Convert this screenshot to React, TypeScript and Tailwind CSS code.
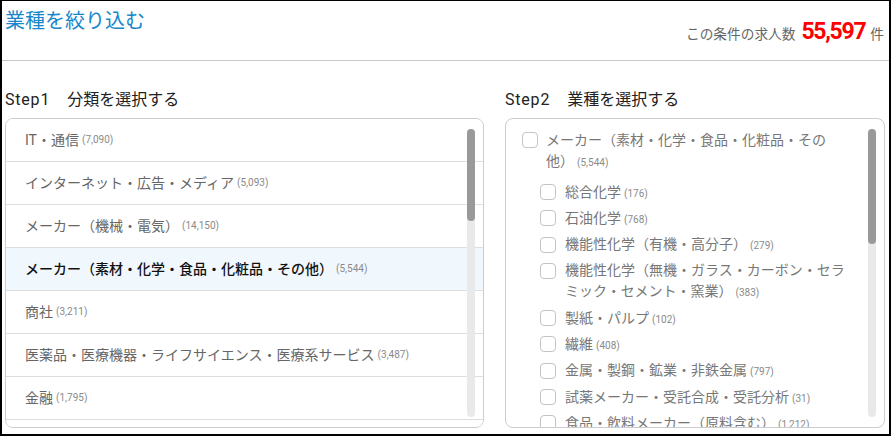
import React from "react";

const FONT = { fontFamily: '"Roboto", "Noto Sans CJK JP", sans-serif' };

const leftItems: { label: string; count: string; selected?: boolean }[] = [
  { label: "IT・通信", count: "7,090" },
  { label: "インターネット・広告・メディア", count: "5,093" },
  { label: "メーカー（機械・電気）", count: "14,150" },
  { label: "メーカー（素材・化学・食品・化粧品・その他）", count: "5,544", selected: true },
  { label: "商社", count: "3,211" },
  { label: "医薬品・医療機器・ライフサイエンス・医療系サービス", count: "3,487" },
  { label: "金融", count: "1,795" },
  { label: "コンサルティング", count: "2,104" },
];

const subItems: { label: string; count: string }[] = [
  { label: "総合化学", count: "176" },
  { label: "石油化学", count: "768" },
  { label: "機能性化学（有機・高分子）", count: "279" },
  { label: "機能性化学（無機・ガラス・カーボン・セラミック・セメント・窯業）", count: "383" },
  { label: "製紙・パルプ", count: "102" },
  { label: "繊維", count: "408" },
  { label: "金属・製鋼・鉱業・非鉄金属", count: "797" },
  { label: "試薬メーカー・受託合成・受託分析", count: "31" },
  { label: "食品・飲料メーカー（原料含む）", count: "1,212" },
  { label: "化粧品・トイレタリー", count: "260" },
];

function Box() {
  return (
    <span className="mt-[2.5px] block h-[16px] w-[16px] shrink-0 rounded-[4px] border border-[#c4c4c4] bg-white" />
  );
}

function Count({ n }: { n: string }) {
  return <span className="ml-[3px] text-[10px] leading-none text-[#8a8a8a]">({n})</span>;
}

function Scroll({ thumb }: { thumb: number }) {
  return (
    <div className="absolute right-[8px] top-[10px] h-[288px] w-[8px] rounded-full bg-[#e9e9e9]">
      <div className="w-[8px] rounded-full bg-[#999999]" style={{ height: thumb }} />
    </div>
  );
}

function StepTitle({ step, text }: { step: string; text: string }) {
  return (
    <div className="mb-[6px] flex items-baseline text-[16px] leading-[24px] text-[#222222]">
      <span className="tracking-[0.8px]">{step}</span>
      <span className="ml-[17px]">{text}</span>
    </div>
  );
}

export default function App() {
  return (
    <div
      className="h-[436px] w-[891px] overflow-hidden border-b-2 border-l-2 border-r-2 border-t border-black bg-white [text-spacing-trim:space-all]"
      style={FONT}
    >
      <div className="flex h-[60px] items-start justify-between border-b border-[#c8c8c8] pl-[3px] pr-[5px]">
        <h1 className="mt-[5px] text-[20px] leading-[30px] text-[#1787c9]">業種を絞り込む</h1>
        <div className="mt-[14px] flex items-baseline text-[#666666]">
          <span className="text-[13.7px]">この条件の求人数</span>
          <span className="ml-[6px] mr-[5px] text-[23px] font-bold tracking-[-1.3px] text-[#ff0000]">55,597</span>
          <span className="text-[13.7px]">件</span>
        </div>
      </div>

      <div className="flex gap-[21px] pl-[3px] pt-[27px]">
        <div className="w-[479px]">
          <StepTitle step="Step1" text="分類を選択する" />
          <div className="relative h-[310px] overflow-hidden rounded-[8px] border border-[#cccccc]">
            {leftItems.map((it) => (
              <div
                key={it.label}
                className={
                  "flex h-[43px] items-center border-b border-[#dddddd] pl-[19px] " +
                  (it.selected ? "bg-[#f0f7fd]" : "bg-white")
                }
              >
                <span
                  className={
                    "text-[14px] " + (it.selected ? "font-medium text-[#111111]" : "text-[#666666]")
                  }
                >
                  {it.label}
                </span>
                <Count n={it.count} />
              </div>
            ))}
            <Scroll thumb={92} />
          </div>
        </div>

        <div className="w-[380px]">
          <StepTitle step="Step2" text="業種を選択する" />
          <div className="relative h-[310px] overflow-hidden rounded-[8px] border border-[#cccccc] pl-[16px] pr-[34px] pt-[10.5px]">
            <div className="flex items-start">
              <Box />
              <div className="ml-[8px] text-[14px] leading-[21px] text-[#777777]">
                メーカー（素材・化学・食品・化粧品・その他）
                <Count n="5,544" />
              </div>
            </div>
            <div className="mt-[10px] flex flex-col gap-[5.3px] pl-[18px]">
              {subItems.map((s) => (
                <div key={s.label} className="flex items-start">
                  <Box />
                  <div className="ml-[9px] text-[14px] leading-[21px] text-[#777777]">
                    {s.label}
                    <Count n={s.count} />
                  </div>
                </div>
              ))}
            </div>
            <Scroll thumb={115} />
          </div>
        </div>
      </div>
    </div>
  );
}
